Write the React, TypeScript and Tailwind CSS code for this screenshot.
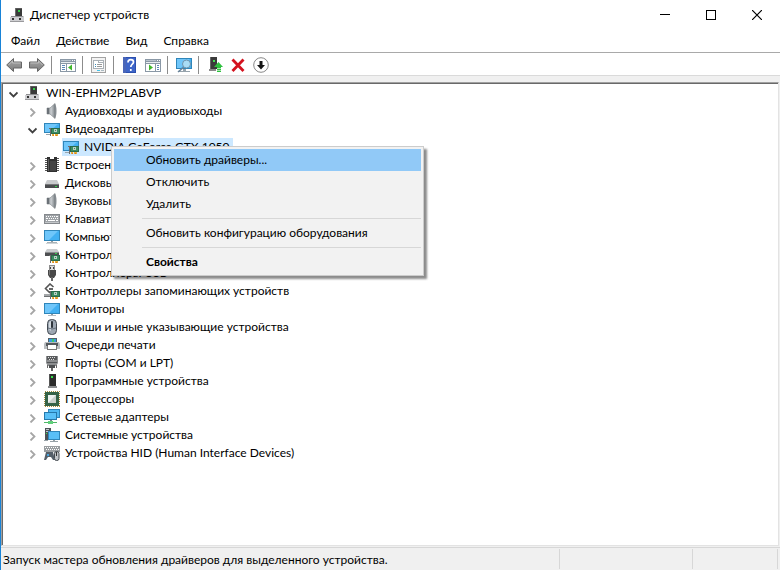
import React from "react";

type Glyph = () => React.ReactElement;

function Svg({ children, smooth = false }: { children: React.ReactNode; smooth?: boolean }) {
  return (
    <svg
      className="block h-4 w-4 shrink-0"
      viewBox="0 0 16 16"
      shapeRendering={smooth ? "auto" : "crispEdges"}
      aria-hidden="true"
    >
      {children}
    </svg>
  );
}

/* Small green adapter card shared by several device icons */
function Card({ y = 7 }: { y?: number }) {
  return (
    <g transform={`translate(5 ${y})`}>
      <path d="M0 0h2v8H1V1H0z" fill="#6b6b6b" />
      <rect x="2" y="0" width="9" height="6" fill="#2c6b4a" />
      <rect x="3" y="1" width="7" height="4" fill="#3b8d62" />
      <rect x="5" y="1" width="3" height="3" fill="#b9d3c5" />
      <rect x="6" y="2" width="1" height="1" fill="#4d7a63" />
      <path d="M3 6h2v2H3zM6 6h3v2H6z" fill="#e3b13a" />
      <rect x="4" y="7" width="1" height="1" fill="#e8741b" />
      <rect x="7" y="7" width="1" height="1" fill="#e8741b" />
    </g>
  );
}

const RootIcon: Glyph = () => (
  <Svg>
    <path d="M5 1h7v9H5z" fill="#3a3a3a" />
    <path d="M5 1h1v9H5z" fill="#6f6f6f" />
    <path d="M6 1h6v1H6z" fill="#5a5a5a" />
    <rect x="8" y="3" width="2" height="2" fill="#35d04a" />
    <path d="M1 9h12l1 1v5H0v-5z" fill="#cfcfd2" />
    <path d="M1 9h12v1H1z" fill="#8f8f92" />
    <path d="M0 14h14v1H0z" fill="#9a9a9d" />
    <path d="M2 11h2v2H2zM9 11h2v2H9z" fill="#333" />
  </Svg>
);

const SpeakerIcon: Glyph = () => (
  <Svg smooth>
    <defs>
      <linearGradient id="spk" x1="0" x2="1" y1="0" y2="0">
        <stop offset="0" stopColor="#555b60" />
        <stop offset="0.5" stopColor="#cdd1d4" />
        <stop offset="1" stopColor="#7d8388" />
      </linearGradient>
    </defs>
    <path d="M3 5h3l5-4.500v15L6 11H3z" fill="url(#spk)" stroke="#7b8085" strokeWidth=".6" />
    <path d="M3 5h2v6H3z" fill="#6b7177" />
    <path d="M11 .5c2 3.500 2 11.500 0 15z" fill="#868c91" />
  </Svg>
);

function Screen({ h = 10 }: { h?: number }) {
  return (
    <g>
      <rect x="0" y="1" width="16" height={h} fill="#2f86ba" />
      <rect x="1" y="2" width="14" height={h - 2} fill="#42b0f2" />
      <path d={`M1 2h13L5 ${h}H1z`} fill="#6fc6fa" shapeRendering="auto" />
    </g>
  );
}

const DisplayIcon: Glyph = () => (
  <Svg>
    <g transform="translate(0 1)">
      <Screen />
    </g>
    <path d="M2 13h4v1H2z" fill="#9aa5ac" />
    <Card />
  </Svg>
);

const ChipIcon: Glyph = () => (
  <Svg>
    <path d="M1 1h2v1H1zM1 3h2v1H1zM1 5h2v1H1zM1 7h2v1H1zM1 9h2v1H1zM1 11h2v1H1zM1 13h2v1H1zM13 1h2v1h-2zM13 3h2v1h-2zM13 5h2v1h-2zM13 7h2v1h-2zM13 9h2v1h-2zM13 11h2v1h-2zM13 13h2v1h-2z" fill="#555" />
    <path d="M3 0h3v2h4V0h3v15H3z" fill="#303030" />
    <path d="M4 2h1v12H4z" fill="#5c5c5c" />
    <path d="M6 4h6v10H6z" fill="#434343" />
  </Svg>
);

const DiskIcon: Glyph = () => (
  <Svg>
    <path d="M3 5h10l2 4H1z" fill="#c9cbcd" shapeRendering="auto" />
    <path d="M1 9h14v4H1z" fill="#4a4c4e" />
    <path d="M1 9h14v1H1z" fill="#77797b" />
    <path d="M11 11h2v1h-2z" fill="#35d04a" />
  </Svg>
);

const KeyboardIcon: Glyph = () => (
  <Svg>
    <path d="M0 3h16v10H0z" fill="#85898d" />
    <path d="M1 4h14v8H1z" fill="#9fa3a7" />
    <path
      d="M2 5h1v1H2zM4 5h1v1H4zM6 5h1v1H6zM8 5h1v1H8zM10 5h1v1h-1zM12 5h2v1h-2zM2 7h2v1H2zM5 7h1v1H5zM7 7h1v1H7zM9 7h1v1H9zM11 7h1v1h-1zM13 7h1v1h-1zM2 9h1v1H2zM4 9h7v1H4zM12 9h2v1h-2z"
      fill="#fff"
    />
    <path d="M1 11h14v1H1z" fill="#c3c6c9" />
  </Svg>
);

const ComputerIcon: Glyph = () => (
  <Svg>
    <Screen h={11} />
    <path d="M7 12h2v2H7z" fill="#8f999f" />
    <path d="M3 13h10v1H3z" fill="#a9b2b7" />
    <path d="M2 14h12v1H2z" fill="#d0d5d8" />
  </Svg>
);

const StorageCtlIcon: Glyph = () => (
  <Svg>
    <path d="M3 2h10l2 3H1z" fill="#c9cbcd" shapeRendering="auto" />
    <path d="M1 5h14v4H1z" fill="#4d4f51" />
    <path d="M1 5h14v1H1z" fill="#8c8e90" />
    <path d="M11 6h2v1h-2z" fill="#35d04a" />
    <Card y={8} />
  </Svg>
);

const UsbIcon: Glyph = () => (
  <Svg>
    <path d="M5 0h6v5H5z" fill="#8c8c8c" />
    <path d="M6 1h4v4H6z" fill="#dcdcdc" />
    <path d="M6 2h1v2H6zM9 2h1v2H9z" fill="#444" />
    <path d="M4 5h8v5l-2 3H6l-2-3z" fill="#484848" shapeRendering="auto" />
    <path d="M5 5h1v5H5z" fill="#777" />
    <path d="M7 12h2v4H7z" fill="#666" />
  </Svg>
);

const MemoryCtlIcon: Glyph = () => (
  <Svg>
    <path d="M9.500 4L6 1 1.500 5.500 6 10" fill="none" stroke="#555" strokeWidth="1.600" shapeRendering="auto" />
    <path d="M5 5h4v2H5z" fill="#666" />
    <path d="M0 11h6v3H0z" fill="#a4a7a9" />
    <path d="M0 13h6v1H0z" fill="#6e7173" />
    <Card y={8} />
  </Svg>
);

const MonitorIcon: Glyph = () => (
  <Svg>
    <g transform="translate(0 1)">
      <Screen h={11} />
    </g>
    <path d="M4 14h8v1H4z" fill="#b4bbc0" />
    <path d="M7 13h2v1H7z" fill="#8f999f" />
  </Svg>
);

const MouseIcon: Glyph = () => (
  <Svg smooth>
    <rect x="3.500" y=".5" width="9" height="15" rx="4" fill="#9da7b2" stroke="#434a52" />
    <path d="M5 4q0-2 2-2v10q-2-1-2-3z" fill="#d2d9df" />
    <rect x="7" y="2" width="2" height="7" rx="1" fill="#2e343b" />
    <path d="M4 9q4 2 8 0" fill="none" stroke="#68727d" />
  </Svg>
);

const PrinterIcon: Glyph = () => (
  <Svg>
    <path d="M4 1h9v5H4z" fill="#51606b" />
    <path d="M5 2h7v3H5z" fill="#3b9ee0" />
    <path d="M8 2h2v3H8z" fill="#3fc66a" />
    <path d="M1 5h14l1 2v5H0V7z" fill="#b9bdc0" shapeRendering="auto" />
    <path d="M2 6h12v3H2z" fill="#54595d" />
    <path d="M3 9h10v4H3z" fill="#777" />
    <path d="M4 8h8v4H4z" fill="#fff" />
  </Svg>
);

const PortIcon: Glyph = () => (
  <Svg>
    <path d="M2 1h12v7l-2 3H4L2 8z" fill="#8d8f91" shapeRendering="auto" />
    <path d="M3 1h10v4H3z" fill="#5a5c5e" />
    <path d="M4 2h1v1H4zM6 2h1v1H6zM8 2h1v1H8zM10 2h1v1h-1zM5 4h1v1H5zM7 4h1v1H7zM9 4h1v1H9z" fill="#ddd" />
    <path d="M3 7h10v1H3z" fill="#55585a" />
    <path d="M5 10h6v3H5z" fill="#4d4f51" />
    <path d="M3 10h1v3H3zM12 10h1v3h-1zM7 13h2v3H7z" fill="#666" />
  </Svg>
);

const TowerIcon: Glyph = () => (
  <Svg>
    <path d="M5 1h7v12H5z" fill="#2b2b2b" />
    <path d="M5 1h1v12H5z" fill="#555" />
    <path d="M7 3h2v2H7z" fill="#35e04a" />
    <path d="M4 13h9v2H4z" fill="#8b8d8f" />
  </Svg>
);

const CpuIcon: Glyph = () => (
  <Svg>
    <rect x=".5" y=".5" width="15" height="15" fill="none" stroke="#a68b3c" strokeDasharray="1 1" />
    <rect x="1" y="1" width="14" height="14" fill="#356347" />
    <rect x="4" y="4" width="8" height="8" fill="#c9cfcb" />
    <path d="M4 4h8L4 12z" fill="#eef1ef" shapeRendering="auto" />
  </Svg>
);

const NetworkIcon: Glyph = () => (
  <Svg>
    <path d="M4 0h12v9H4z" fill="#2f86ba" />
    <path d="M5 1h10v7H5z" fill="#4fb8f2" />
    <path d="M0 3h13v8H0z" fill="#2679ac" />
    <path d="M1 4h11v6H1z" fill="#59c0f7" />
    <path d="M6 11h2v2H6z" fill="#75828a" />
    <path d="M0 13h13v1H0z" fill="#4fb868" />
    <path d="M4 12h5v3H4z" fill="#5fd07a" />
  </Svg>
);

const SystemIcon: Glyph = () => (
  <Svg>
    <path d="M1 1h6v12H1z" fill="#4d5257" />
    <path d="M2 2h3v1H2zM2 4h2v1H2z" fill="#bfc4c8" />
    <path d="M2 6h1v1H2z" fill="#35e04a" />
    <path d="M4 4h12v9H4z" fill="#2f86ba" />
    <path d="M5 5h10v7H5z" fill="#59bff7" />
    <path d="M9 13h2v1H9zM6 14h8v1H6zM0 13h4v1H0z" fill="#98a2a8" />
  </Svg>
);

const HidIcon: Glyph = () => (
  <Svg>
    <path d="M0 1h16v6H0z" fill="#9a9ea1" />
    <path d="M1 2.500h14M2 4.500h13" stroke="#fff" strokeWidth="1" strokeDasharray="1 1" />
    <path d="M2 7h7l2 8H9l-2-3H4l-2 3H0z" fill="#555f69" shapeRendering="auto" />
    <path d="M3 9h2v2H3z" fill="#49a4dc" />
    <rect x="10.500" y="6.500" width="4.500" height="9" rx="2" fill="#c0c4c8" stroke="#454b51" shapeRendering="auto" />
    <path d="M12 7h1v4h-1z" fill="#333" />
  </Svg>
);

const BackIcon: Glyph = () => (
  <Svg smooth>
    <defs>
      <linearGradient id="arr" x1="0" x2="0" y1="0" y2="1">
        <stop offset="0" stopColor="#a8a8a8" />
        <stop offset="1" stopColor="#7c7c7c" />
      </linearGradient>
    </defs>
    <path d="M.7 8L7.500 1.500v3.500h8v6h-8v3.500z" fill="url(#arr)" stroke="#666" />
    <path d="M2.500 8L6.500 4v2h8" fill="none" stroke="#bdbdbd" />
  </Svg>
);

const ForwardIcon: Glyph = () => (
  <Svg smooth>
    <path d="M15.300 8L8.500 1.500v3.500h-8v6h8v3.500z" fill="url(#arr)" stroke="#666" />
    <path d="M1.500 6h8V4l4 4" fill="none" stroke="#bdbdbd" />
  </Svg>
);

function Pane({ children }: { children: React.ReactNode }) {
  return (
    <Svg>
      <path d="M0 2h16v13H0z" fill="#8a98a6" />
      <path d="M1 3h10v1H1z" fill="#b9c3cd" />
      <path d="M12 3h1v1h-1zM14 3h1v1h-1z" fill="#fff" />
      <path d="M1 5h14v1H1z" fill="#e9edf0" />
      <path d="M1 7h14v7H1z" fill="#fff" />
      {children}
    </Svg>
  );
}

const TreePaneIcon: Glyph = () => (
  <Pane>
    <path d="M6 7h1v7H6z" fill="#8a98a6" />
    <path d="M2 8h3v1H2zM2 10h3v1H2zM2 12h3v1H2z" fill="#5b87b8" />
    <path d="M12 7.500v6L8 10.500z" fill="#3fb62c" shapeRendering="auto" />
  </Pane>
);

const ActionPaneIcon: Glyph = () => (
  <Pane>
    <path d="M10 7h1v7h-1z" fill="#8a98a6" />
    <path d="M12 8h2v1h-2zM12 10h2v1h-2zM12 12h2v1h-2z" fill="#5b87b8" />
    <path d="M4 7.500v6l4-3z" fill="#3fb62c" shapeRendering="auto" />
  </Pane>
);

const PropertiesIcon: Glyph = () => (
  <Svg>
    <path d="M0 0h15v16H0z" fill="#a3a3a3" />
    <path d="M1 1h13v14H1z" fill="#f3f3f3" />
    <path d="M2 3h11v9H2z" fill="#a9b0b6" />
    <path d="M3 6h9v5H3zM3 4h4v2H3zM8 4h4v1H8z" fill="#fff" />
    <path d="M4 7h1v1H4zM4 9h1v1H4z" fill="#3d8db8" />
    <path d="M6 7h5v1H6zM6 9h5v1H6z" fill="#999" />
    <path d="M6 13h3v1H6z" fill="#45c3e8" />
    <path d="M10 13h3v1h-3z" fill="#a8b8c0" />
  </Svg>
);

const HelpIcon: Glyph = () => (
  <Svg smooth>
    <path d="M1 0h13v16H1z" fill="#2b4fae" />
    <path d="M1 0h3v16H1z" fill="#4a66b8" />
    <path d="M4 1h9v14H4z" fill="#3e65c8" />
    <path d="M6 5.500C6 1.500 11.500 2 11.500 5c0 2.300-2.700 2-2.700 5M8.800 12v2" fill="none" stroke="#fff" strokeWidth="1.700" />
  </Svg>
);

const ScanIcon: Glyph = () => (
  <Svg>
    <Screen h={11} />
    <path d="M3 14h11v1H3zM7 12h3v2H7z" fill="#96a3ac" />
    <path d="M8 10l-6 5" stroke="#68839a" strokeWidth="1.600" shapeRendering="auto" />
    <circle cx="10.500" cy="7" r="4" fill="#a9dcf5" stroke="#6f93ac" shapeRendering="auto" />
  </Svg>
);

const UpdateIcon: Glyph = () => (
  <Svg>
    <path d="M3 0h7v12H3z" fill="#3a3a3a" />
    <path d="M3 0h1v12H3z" fill="#686868" />
    <path d="M6 3h2v2H6z" fill="#42dc50" />
    <path d="M2 12h7v2H2z" fill="#8a8a8a" />
    <path d="M11.500 5l4.500 5H7z" fill="#2fc03f" shapeRendering="auto" />
    <path d="M10 10h4v1h-4zM10 12h4v1h-4zM10 14h4v1h-4z" fill="#2fc03f" />
    <path d="M10 11h4v1h-4zM10 13h4v1h-4z" fill="#a9e8ae" />
  </Svg>
);

const RemoveIcon: Glyph = () => (
  <Svg smooth>
    <path d="M2.500 2.500l11 11.500M13.500 2.500L2.500 14" stroke="#d4121e" strokeWidth="2.800" />
  </Svg>
);

const DisableIcon: Glyph = () => (
  <Svg smooth>
    <circle cx="8" cy="8" r="7.300" fill="#fff" stroke="#888" />
    <path d="M6.500 4h3v4H12l-4 4.500L4 8h2.500z" fill="#151515" />
  </Svg>
);

function Chevron({ open }: { open: boolean }) {
  return (
    <svg className="block h-[9px] w-[9px]" viewBox="0 0 9 9" fill="none" aria-hidden="true">
      {open ? (
        <path d="M.5 2.500l4 4 4-4" stroke="#404040" strokeWidth="1.800" />
      ) : (
        <path d="M2.500 .5l4 4-4 4" stroke="#a6a6a6" strokeWidth="1.800" />
      )}
    </svg>
  );
}

const categories: { name: string; icon: Glyph; child?: string }[] = [
  { name: "Аудиовходы и аудиовыходы", icon: SpeakerIcon },
  { name: "Видеоадаптеры", icon: DisplayIcon, child: "NVIDIA GeForce GTX 1050" },
  { name: "Встроенное ПО", icon: ChipIcon },
  { name: "Дисковые устройства", icon: DiskIcon },
  { name: "Звуковые, игровые и видеоустройства", icon: SpeakerIcon },
  { name: "Клавиатуры", icon: KeyboardIcon },
  { name: "Компьютер", icon: ComputerIcon },
  { name: "Контроллеры IDE ATA/ATAPI", icon: StorageCtlIcon },
  { name: "Контроллеры USB", icon: UsbIcon },
  { name: "Контроллеры запоминающих устройств", icon: MemoryCtlIcon },
  { name: "Мониторы", icon: MonitorIcon },
  { name: "Мыши и иные указывающие устройства", icon: MouseIcon },
  { name: "Очереди печати", icon: PrinterIcon },
  { name: "Порты (COM и LPT)", icon: PortIcon },
  { name: "Программные устройства", icon: TowerIcon },
  { name: "Процессоры", icon: CpuIcon },
  { name: "Сетевые адаптеры", icon: NetworkIcon },
  { name: "Системные устройства", icon: SystemIcon },
  { name: "Устройства HID (Human Interface Devices)", icon: HidIcon },
];

const toolGroups: { label: string; icon: Glyph }[][] = [
  [
    { label: "Назад", icon: BackIcon },
    { label: "Вперед", icon: ForwardIcon },
  ],
  [{ label: "Дерево консоли", icon: TreePaneIcon }],
  [{ label: "Свойства", icon: PropertiesIcon }],
  [
    { label: "Справка", icon: HelpIcon },
    { label: "Панель действий", icon: ActionPaneIcon },
  ],
  [{ label: "Обновить конфигурацию оборудования", icon: ScanIcon }],
  [
    { label: "Обновить драйверы", icon: UpdateIcon },
    { label: "Удалить", icon: RemoveIcon },
    { label: "Отключить", icon: DisableIcon },
  ],
];

const menuGroups = [
  ["Обновить драйверы...", "Отключить", "Удалить"],
  ["Обновить конфигурацию оборудования"],
  ["Свойства"],
];

function TitleBar() {
  return (
    <header className="flex h-[30px] shrink-0 items-center bg-white pl-[9px]">
      <RootIcon />
      <h1 className="ml-1 flex-1">Диспетчер устройств</h1>
      <button aria-label="Свернуть" className="flex h-full w-[46px] items-center justify-center">
        <svg className="h-[10px] w-[10px]" viewBox="0 0 10 10" shapeRendering="crispEdges">
          <path d="M0 4h10v1H0z" />
        </svg>
      </button>
      <button aria-label="Развернуть" className="flex h-full w-[46px] items-center justify-center">
        <svg className="h-[10px] w-[10px]" viewBox="0 0 10 10" shapeRendering="crispEdges">
          <path d="M.5.5h9v9h-9z" fill="none" stroke="#000" />
        </svg>
      </button>
      <button aria-label="Закрыть" className="flex h-full w-[46px] items-center justify-center">
        <svg className="h-[10px] w-[10px]" viewBox="0 0 10 10">
          <path d="M0 0l10 10M10 0L0 10" fill="none" stroke="#000" strokeWidth="1.200" />
        </svg>
      </button>
    </header>
  );
}

function TreeRow({ name, icon: Icon, open = false }: { name: string; icon: Glyph; open?: boolean }) {
  return (
    <div className="flex h-[18px] items-center">
      <button aria-label={open ? "Свернуть ветвь" : "Развернуть ветвь"} className="flex w-4 shrink-0 pt-0.5">
        <Chevron open={open} />
      </button>
      <Icon />
      <span className="ml-[5px]">{name}</span>
    </div>
  );
}

function DeviceTree() {
  return (
    <ul role="tree" aria-label="Устройства">
      <li role="treeitem" aria-expanded="true" className="pl-1.5">
        <TreeRow name="WIN-EPHM2PLABVP" icon={RootIcon} open />
        <ul role="group" className="pl-[19px]">
          {categories.map((c) => (
            <li key={c.name} role="treeitem" aria-expanded={Boolean(c.child)}>
              <TreeRow name={c.name} icon={c.icon} open={Boolean(c.child)} />
              {c.child && (
                <div role="group" className="flex pl-[34px]">
                  <div
                    role="treeitem"
                    aria-selected="true"
                    className="flex h-[18px] items-center bg-[#cce8ff] pr-[3px] pl-px"
                  >
                    <DisplayIcon />
                    <span className="ml-[5px]">{c.child}</span>
                  </div>
                </div>
              )}
            </li>
          ))}
        </ul>
      </li>
    </ul>
  );
}

function ContextMenu() {
  return (
    <div
      role="menu"
      className="absolute top-[146px] left-[110px] w-[313px] border border-[#ccc] bg-[#f2f2f2] p-0.5 shadow-[3px_3px_2px_rgba(0,0,0,0.45)]"
    >
      {menuGroups.map((group, g) => (
        <div key={group[0]}>
          {g > 0 && <div role="separator" className="my-[3px] ml-7 h-px bg-[#d7d7d7]" />}
          {group.map((item, i) => (
            <button
              key={item}
              role="menuitem"
              className={`flex h-[22px] w-full items-center pl-8 ${g === 0 && i === 0 ? "bg-[#91c9f7]" : ""} ${g === 2 ? "font-bold" : ""}`}
            >
              {item}
            </button>
          ))}
        </div>
      ))}
    </div>
  );
}

export default function App() {
  return (
    <div className="relative flex h-screen flex-col overflow-hidden border-l border-[#1883d7] bg-[#f0f0f0] font-[Lato,'Open_Sans',sans-serif] text-[12px] leading-[16px] whitespace-nowrap text-black">
      <TitleBar />
      <nav className="flex h-[22px] shrink-0 items-center gap-4 bg-white pl-2.5">
        {["Файл", "Действие", "Вид", "Справка"].map((m) => (
          <button key={m}>{m}</button>
        ))}
      </nav>
      <div
        role="toolbar"
        aria-label="Панель инструментов"
        className="flex h-6 shrink-0 items-center border-y border-t-[#a9a9a9] border-b-[#dadada] bg-white pt-0.5 pl-px"
      >
        {toolGroups.map((group, g) => (
          <div key={g} className="flex items-center">
            {g > 0 && <div className="mr-1 ml-[3px] h-[18px] w-px bg-[#8c8c8c]" />}
            {group.map(({ label, icon: Icon }) => (
              <button key={label} aria-label={label} className="w-[23px] pl-1">
                <Icon />
              </button>
            ))}
          </div>
        ))}
      </div>
      <main className="mt-1.5 mr-px flex min-h-0 flex-1 border border-t-[#a0a0a0] border-r-[#e3e3e3] border-b-[#e3e3e3] border-l-[#a0a0a0] bg-white">
        <div className="flex-1 overflow-hidden border-t border-l border-[#696969]">
          <DeviceTree />
        </div>
      </main>
      <footer className="mt-px flex h-[23px] shrink-0 border-t border-[#d7d7d7] pt-px pr-0.5">
        <p className="flex flex-1 items-center pl-0.5">Запуск мастера обновления драйверов для выделенного устройства.</p>
        <div className="h-5 w-[133px] border-l border-[#d7d7d7]" />
        <div className="h-5 w-[86px] border-x border-[#d7d7d7]" />
      </footer>
      <ContextMenu />
    </div>
  );
}
